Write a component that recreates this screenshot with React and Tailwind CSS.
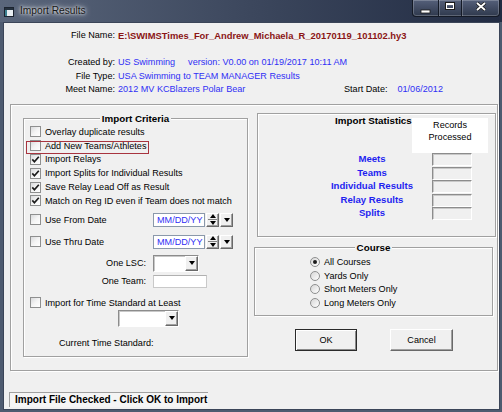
import React from 'react';

const etched = "border border-[#a0a0a0] shadow-[inset_1px_1px_0_#fff,1px_1px_0_#fff]";
const raised = "bg-[#f0f0f0] border border-t-white border-l-white border-r-[#696969] border-b-[#696969] shadow-[inset_-1px_-1px_0_#a0a0a0]";
const sunken = "border border-t-[#8c8c8c] border-l-[#8c8c8c] border-r-white border-b-white shadow-[inset_1px_1px_0_#c8c8c8]";

function Check({ on }) {
    return (
        <span className="w-[11px] h-[11px] shrink-0 border border-[#8e8f8f] bg-linear-to-br from-[#d9dadc] via-[#f4f4f4] to-white flex items-center justify-center">
            {on && (
                <svg width="9" height="9" viewBox="0 0 9 9">
                    <path d="M1.3 4.4 L3.4 6.8 L7.8 1.7" fill="none" stroke="#1b1b1b" strokeWidth="1.7" />
                </svg>
            )}
        </span>
    );
}

function Radio({ on }) {
    return (
        <span className="w-[10px] h-[10px] shrink-0 rounded-full border border-[#8e8f8f] bg-linear-to-br from-[#d6d6d6] to-white flex items-center justify-center">
            {on && <span className="w-[4px] h-[4px] rounded-full bg-[#1b1b1b]" />}
        </span>
    );
}

function DownArrow() {
    return <span className="w-0 h-0 border-l-[3.5px] border-r-[3.5px] border-t-[4px] border-l-transparent border-r-transparent border-t-black" />;
}

function DropBtn() {
    return (
        <span className={`w-[13px] h-full shrink-0 flex items-center justify-center ${raised}`}>
            <DownArrow />
        </span>
    );
}

function Combo({ w }) {
    return (
        <span className={`${w} h-[17px] flex bg-white ${sunken}`}>
            <span className="flex-1" />
            <DropBtn />
        </span>
    );
}

function DateBox() {
    return (
        <span className="flex h-[14px]">
            <span className="w-[52px] h-full bg-white border border-[#8a98aa] pl-[3px] leading-[12px] text-[#2f2ff5]">MM/DD/YY</span>
            <span className={`ml-[1px] w-[13px] h-full flex flex-col items-center justify-around ${raised}`}>
                <span className="w-0 h-0 border-l-[3.5px] border-r-[3.5px] border-b-[4px] border-l-transparent border-r-transparent border-b-black" />
                <span className="w-[9px] h-px bg-[#808080]" />
                <DownArrow />
            </span>
            <span className="ml-[1px] h-full flex">
                <DropBtn />
            </span>
        </span>
    );
}

function CheckRow({ label, on, mark }) {
    return (
        <div className="flex items-center h-[13.8px] pl-[6px]">
            <span className="relative inline-flex items-center gap-[4px]">
                <Check on={on} />
                <span className="leading-[12px] whitespace-nowrap">{label}</span>
                {mark && <span className="absolute left-[-4px] right-[-3px] top-[1px] bottom-[-2px] border border-[#a8343f]" />}
            </span>
        </div>
    );
}

function TitleBar() {
    return (
        <div className="h-[22px] shrink-0 flex items-start bg-linear-to-r from-[#5a667b] via-[#3c475d] to-[#222c43]">
            <svg className="ml-[4px] mt-[7px]" width="10" height="10" viewBox="0 0 10 10">
                <rect x="0.5" y="0.5" width="9" height="9" fill="#e8eef2" stroke="#1c2430" />
                <rect x="1" y="1" width="8" height="2" fill="#26323f" />
                <rect x="1" y="3" width="2" height="6" fill="#3b7f8f" />
            </svg>
            <span className="ml-[6px] mt-[4px] leading-[13px] text-[10.2px] text-[#161616] [text-shadow:0_0_6px_#fff,0_0_3px_#fff]">Import Results</span>
            <div className="ml-auto mr-[2px] h-[17px] flex rounded-b-[4px] border border-t-0 border-[#141a26] overflow-hidden bg-linear-to-b from-[#55607a] to-[#2f394d] shadow-[inset_0_0_0_1px_rgba(255,255,255,0.22)]">
                <span className="w-[25px] flex items-end justify-center pb-[1px]">
                    <svg width="11" height="6" viewBox="0 0 11 6"><rect x="1" y="1" width="9" height="3" fill="#fff" stroke="#1b1b1b" strokeWidth="0.8" /></svg>
                </span>
                <span className="w-[23px] border-l border-[#141a26] flex items-start justify-center pt-[2px] shadow-[inset_1px_0_0_rgba(255,255,255,0.22)]">
                    <svg width="10" height="8" viewBox="0 0 10 8"><rect x="1" y="1" width="8" height="6" fill="none" stroke="#1b1b1b" strokeWidth="2" /><rect x="1.5" y="1.5" width="7" height="5" fill="none" stroke="#fff" strokeWidth="1" /><rect x="1.5" y="1.5" width="7" height="1.6" fill="#fff" /></svg>
                </span>
                <span className="w-[38px] border-l border-[#141a26] flex items-start justify-center pt-[2px] shadow-[inset_1px_0_0_rgba(255,255,255,0.22)]">
                    <svg width="12" height="9" viewBox="0 0 12 9"><path d="M2 1 L10 8 M10 1 L2 8" stroke="#1b1b1b" strokeWidth="3.4" /><path d="M2 1 L10 8 M10 1 L2 8" stroke="#fff" strokeWidth="1.8" /></svg>
                </span>
            </div>
        </div>
    );
}

function Header() {
    const blue = "text-[#2f2ff5]";
    return (
        <div className="pt-[6px] flex flex-col leading-[13.5px]">
            <div className="flex h-[13.5px] items-center whitespace-nowrap">
                <span className="w-[111px] text-right">File Name:</span>
                <span className="ml-[3px] font-bold text-[9.4px] text-[#8b1515]">{"E:\\SWIMSTimes_For_Andrew_Michaela_R_20170119_101102.hy3"}</span>
            </div>
            <div className="mt-[13.5px] flex h-[13.5px] items-center whitespace-nowrap">
                <span className="w-[111px] text-right">Created by:</span>
                <span className={`ml-[3px] ${blue}`}>US Swimming</span>
                <span className={`ml-[13px] ${blue}`}>version: V0.00 on 01/19/2017 10:11 AM</span>
            </div>
            <div className="flex h-[13.5px] items-center whitespace-nowrap">
                <span className="w-[111px] text-right">File Type:</span>
                <span className={`ml-[3px] ${blue}`}>USA Swimming to TEAM MANAGER Results</span>
            </div>
            <div className="flex h-[13.5px] items-center whitespace-nowrap">
                <span className="w-[111px] text-right">Meet Name:</span>
                <span className={`ml-[3px] w-[226px] ${blue}`}>2012 MV KCBlazers Polar Bear</span>
                <span>Start Date:</span>
                <span className={`ml-[10px] ${blue}`}>01/06/2012</span>
            </div>
        </div>
    );
}

function Criteria() {
    const rows = [
        ["Overlay duplicate results", false],
        ["Add New Teams/Athletes", false, true],
        ["Import Relays", true],
        ["Import Splits for Individual Results", true],
        ["Save Relay Lead Off as Result", true],
        ["Match on Reg ID even if Team does not match", true],
    ];
    return (
        <div className={`ml-[12px] mt-[13px] w-[225px] h-[239px] shrink-0 flex flex-col ${etched}`}>
            <div className="-mt-[6.5px] mx-auto px-[2px] bg-[#f0f0f0] h-[12px] leading-[12px] font-bold text-[9.8px]">Import Criteria</div>
            <div className="mt-[0.5px] flex flex-col">
                {rows.map(([label, on, mark]) => (
                    <CheckRow key={label} label={label} on={on} mark={mark} />
                ))}
            </div>
            <div className="mt-[5px] flex items-center h-[14px] pl-[6px]">
                <span className="w-[123px] flex items-center gap-[4px]"><Check /><span className="leading-[12px]">Use From Date</span></span>
                <DateBox />
            </div>
            <div className="mt-[8px] flex items-center h-[14px] pl-[6px]">
                <span className="w-[123px] flex items-center gap-[4px]"><Check /><span className="leading-[12px]">Use Thru Date</span></span>
                <DateBox />
            </div>
            <div className="mt-[6px] flex items-center">
                <span className="w-[122px] text-right leading-[12px]">One LSC:</span>
                <span className="ml-[7px]"><Combo w="w-[46px]" /></span>
            </div>
            <div className="mt-[3px] flex items-center">
                <span className="w-[122px] text-right leading-[12px]">One Team:</span>
                <span className="ml-[7px] w-[54px] h-[13px] bg-white border border-[#c9c9c9] border-t-[#b0b0b0]" />
            </div>
            <div className="mt-[8px]">
                <CheckRow label="Import for Time Standard at Least" on={false} />
            </div>
            <div className="ml-[94px]">
                <Combo w="w-[61px]" />
            </div>
            <div className="mt-[10px] ml-[35px] leading-[12px]">Current Time Standard:</div>
        </div>
    );
}

function Stats() {
    const items = ["Meets", "Teams", "Individual Results", "Relay Results", "Splits"];
    return (
        <div className={`ml-[3px] mt-[8px] w-[239px] h-[124px] flex flex-col ${etched}`}>
            <div className="flex items-start h-[39px]">
                <span className="ml-[77px] mt-[1px] leading-[12px] font-bold text-[9.8px] whitespace-nowrap">Import Statistics</span>
                <div className="ml-auto mr-[7px] mt-[4px] w-[76px] h-[35px] bg-white flex flex-col items-center pt-[1px] leading-[12px]">
                    <span>Records</span>
                    <span>Processed</span>
                </div>
            </div>
            {items.map((s) => (
                <div key={s} className="flex items-center h-[13.5px]">
                    <span className="ml-[54px] w-[120px] text-center leading-[12px] font-bold text-[9.6px] text-[#1f1ff0] -mt-[1px]">{s}</span>
                    <span className={`w-[40px] h-[13px] ${sunken}`} />
                </div>
            ))}
        </div>
    );
}

function Course() {
    const courses = ["All Courses", "Yards Only", "Short Meters Only", "Long Meters Only"];
    return (
        <div className={`mt-[10px] w-[239px] h-[69px] flex flex-col ${etched}`}>
            <div className="-mt-[6.5px] mx-auto px-[2px] bg-[#f0f0f0] h-[12px] leading-[12px] font-bold text-[9.8px]">Course</div>
            <div className="mt-[1.5px] flex flex-col">
                {courses.map((c, i) => (
                    <div key={c} className="flex items-center h-[13.7px] pl-[55px] gap-[4px]">
                        <Radio on={i === 0} />
                        <span className="leading-[12px]">{c}</span>
                    </div>
                ))}
            </div>
        </div>
    );
}

export default function App() {
    return (
        <div className="w-[502px] h-[412px] overflow-hidden flex flex-col bg-[#4e5b70] font-['Liberation_Sans',Arial,sans-serif] text-[9.1px] text-black">
            <TitleBar />
            <div className="flex-1 ml-[3px] mr-[2px] mb-[2px] border border-[#3b4558] bg-[#f0f0f0] flex flex-col">
                <Header />
                <div className={`ml-[6px] mt-[7.5px] w-[488px] h-[267px] shrink-0 flex ${etched}`}>
                    <Criteria />
                    <div className="ml-[6px] flex flex-col">
                        <Stats />
                        <Course />
                        <div className="mt-[13px] flex">
                            <button className="ml-[41px] w-[62px] h-[22px] bg-[#f0f0f0] border border-[#2a2a2a] shadow-[inset_1px_1px_0_#fff,inset_-1px_-1px_0_#8a8a8a] leading-[12px]">OK</button>
                            <button className={`ml-[33px] w-[63px] h-[22px] leading-[12px] ${raised}`}>Cancel</button>
                        </div>
                    </div>
                </div>
                <div className="ml-[5px] mt-[21px] w-[199px] h-[15px] border-t border-l border-[#a0a0a0] bg-[#f5f5f5] flex items-center pl-[5px] font-bold text-[10px] leading-[12px] whitespace-nowrap">
                    Import File Checked - Click OK to Import
                </div>
            </div>
        </div>
    );
}
